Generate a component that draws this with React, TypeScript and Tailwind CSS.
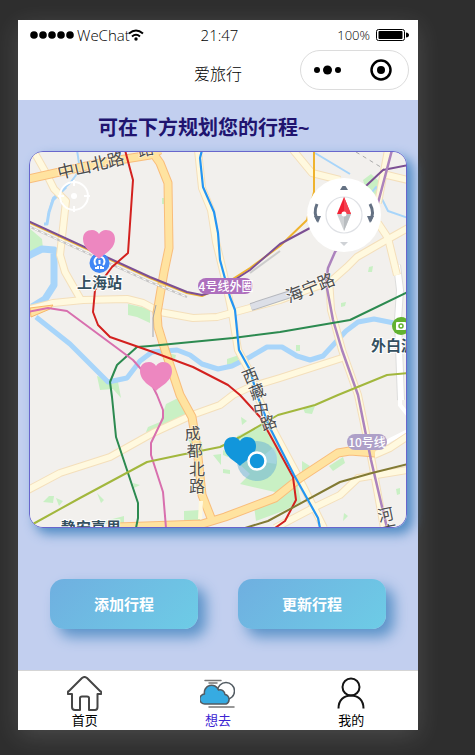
import React from 'react';

const roads = {
  cream: [
    'M33 150 L46 173 L54 189 L66 201 L60 255 L65 272 L81 300',
    'M30 309 L53 303 L83 300 L127 299 L143 303 L160 312 L193 318 L217 317 L250 308 L280 300 L307 290 L330 282 L347 267 L357 257 L383 242 L408 228',
    'M198 150 L202 188 L211 210 L216 242 L224 275 L232 313 L238 350 L250 372 L257 395 L271 426 L299 478 L324 528',
    'M28 490 L60 473 L110 457 L153 433 L192 415 L220 405 L233 395 L250 387 L280 378 L342 358',
    'M275 528 L315 507 L340 495 L358 478 L408 470',
    'M293 150 L312 173 L340 180',
    'M378 223 L388 238 L397 275',
    'M387 175 L408 180',
    'M388 150 L378 203 M329 278 L331 310 L342 350 L358 395 L372 462 L384 528',
    'M374 455 L390 448 L408 436',
  ],
  orange: [
    'M28 179 L100 163 L150 155 L160 150',
    'M148 146 L160 163 L168 183 L169 248 L164 272 L157 313 L158 327 L165 350 L180 395 L192 417 L197 448 L202 495 L213 523',
    'M117 527 L202 524 L225 517 L275 498 L300 478 L338 453 L350 451 L375 453',
  ],
};

const Heart = ({ x, y, fill }: { x: number; y: number; fill: string }) => (
  <path
    transform={`translate(${x} ${y})`}
    fill={fill}
    d="M16 29 C13 25 0 20 0 9 C0 3 4 0 9 0 C12 0 15 2 16 4 C17 2 20 0 23 0 C28 0 32 3 32 9 C32 20 19 25 16 29Z"
  />
);

const CityMap = () => (
  <svg
    viewBox="30 152 376 375"
    preserveAspectRatio="xMidYMid slice"
    className="block h-full w-full font-['Noto_Sans_CJK_SC',sans-serif]"
    role="img"
    aria-label="地图"
  >
    <rect x="0" y="100" width="476" height="500" fill="#f2f0ed" />
    <g fill="#c9f0c4">
      <path d="M28 227 L42 239 L43 249 L28 259Z" />
      <path d="M128 304 L150 309 L150 323 L137 317 L128 315Z" />
      <path d="M97 376 L118 382 L121 398 L113 389 L100 390Z" />
      <path d="M166 404 L178 398 L187 416 L161 430 L146 432 L148 427 L160 422Z" />
      <path d="M237 436 L264 424 L296 476 L301 502 L283 511 L256 521 L254 506 L273 498 L275 492 L240 484 L250 474 L237 462Z" />
      <path d="M363 180 L371 174 L380 182 L375 196 L366 190Z" />
      <path d="M227 359 L239 355 L238 363 L227 365Z" />
      <path d="M329 466 L343 457 L345 463 L333 471Z" />
      <path d="M184 511 L200 510 L200 522 L184 522Z M105 521 L124 516 L124 523 L105 524Z" />
      <path d="M303 408 L315 406 L312 414 L305 413Z M241 417 L247 421 L242 425Z M302 461 L310 466 L302 473Z" />
      <path d="M56 498 L63 501 L59 506Z M49 496 L54 496 L53 503 L43 502Z M97 493 L104 500 L101 503Z M133 483 L140 485 L134 488Z" />
      <path d="M341 303 L346 302 L345 306 L341 307Z M296 345 L300 345 L300 351 L296 351Z M369 267 L373 266 L372 272 L368 272Z M162 198 h3 v6 h-3Z" />
      <path d="M396 489 L400 488 L400 494 L397 495Z M344 513 L348 516 L343 521Z M223 450 L231 454 L228 457 L223 455Z M223 469 L230 470 L230 474 L223 473Z" />
      <path d="M169 353 L176 355 L175 359 L170 357Z M188 439 L202 442 L203 456 L195 453Z M213 455 L221 454 L221 465Z" />
    </g>
    <g fill="none" stroke="#a8d5fa" strokeLinejoin="round">
      <path strokeWidth="2" d="M77 150 L80 170 L70 183 L53 198 L48 216" />
      <path strokeWidth="3" d="M66 187 L53 200 L49 212 L47 224 L44 224" />
      <path strokeWidth="7" d="M26 257 L42 249 L54 250 L54 285 L45 299 L32 307" />
      <path strokeWidth="5" d="M36 317 L70 344 L94 368 L108 382 L127 378 L140 361 L152 352 L177 350 L190 355 L202 364 L218 369 L232 366 L250 357 L267 347 L282 347 L297 356 L310 360 L323 356 L335 343 L346 331 L358 322 L374 319 L394 323 L404 325" />
      <path strokeWidth="2" d="M315 153 L350 174 M366 200 L376 187 L388 211 L408 218" />
    </g>
    <path d="M397 265 L400 290 L398 320 L401 400" fill="none" stroke="#dddddc" strokeWidth="8" />
    <path d="M397 265 L400 290 L398 320 L401 400" fill="none" stroke="#fff" strokeWidth="6" />
    <path d="M400 395 V405 L408 415 M370 455 L390 440 L408 431" fill="none" stroke="#fff" strokeWidth="4" />
    <g fill="none" strokeLinejoin="round">
      {roads.cream.map((d) => <path key={d} d={d} stroke="#f4dfbb" strokeWidth="8" />)}
      {roads.cream.map((d) => <path key={d + 'in'} d={d} stroke="#fff9df" strokeWidth="6" />)}
      {roads.orange.map((d) => <path key={d} d={d} stroke="#f9bd7b" strokeWidth="9" />)}
      {roads.orange.map((d) => <path key={d + 'in'} d={d} stroke="#ffe3a0" strokeWidth="7" />)}
      <path d="M200 519 L201 501" stroke="#fff9df" strokeWidth="4" />
      <path d="M251 307 L300 291" stroke="#b5b7bd" strokeWidth="8" />
      <path d="M251 307 L300 291" stroke="#dcdfe7" strokeWidth="6" />
      <path d="M31 317 L50 309 L53 305 L30 308Z" fill="#ffe3a0" stroke="#f8b569" />
      <path d="M356 152 L384 169" stroke="#aaa" strokeDasharray="4 4" />
      <path d="M153 337 V318 L156 305" stroke="#a4a5aa" />
      <path d="M28 226 L150 282 L187 297" stroke="#c7c6c6" strokeWidth="2" />
      <path d="M28 226 L150 282 L187 297" stroke="#fff" strokeWidth="1" strokeDasharray="4 3" />
      <path d="M250 273 L280 251" stroke="#ccc" strokeWidth="2" />
    </g>
    <g fill="none" strokeWidth="2" strokeLinejoin="round">
      <path stroke="#efb32e" d="M28 222 L150 278 L187 293 L202 296 L217 289 L250 268 L280 246 L307 220 L314 192 L314 150" />
      <path stroke="#7c4f93" d="M28 221 L150 277 L187 292 L202 295 L217 291 L250 270 L280 244 L310 228 L367 185 L383 170 L408 165" />
      <path stroke="#ac83bd" strokeWidth="2.500" d="M392 150 L378 203 L335 252 L328 268 L326 283 L333 320 L342 350 L358 395 L371 460 L387 528" />
      <path stroke="#2c8a50" d="M408 292 L350 320 L280 332 L233 338 L150 346 L137 347 L117 365 L110 382 L112 397 L116 437 L138 503 L138 518 L136 528" />
      <path stroke="#d3211f" d="M125 150 L133 180 L128 253 L112 267 L95 290 L93 312 L98 325 L110 337 L150 351 L193 367 L228 385 L240 395 L260 417 L270 435 L293 477 L296 500 L285 521 L275 528" />
      <path stroke="#d86fae" d="M28 312 L48 308 L67 311 L117 348 L133 360 L148 377 L157 395 L163 410 L163 418 L151 443 L151 455 L163 492 L166 528" />
      <path stroke="#a2b73d" d="M33 524 L80 498 L147 462 L180 455 L220 447 L240 437 L278 415 L315 405 L338 395 L387 375 L408 373" />
      <path stroke="#827a34" d="M245 528 L268 521 L340 482 L372 473 L408 464" />
      <path stroke="#2495f3" strokeWidth="2.200" d="M202 150 L200 158 L203 187 L214 212 L218 233 L220 260 L230 297 L235 310 L239 350 L250 370 L257 395 L270 428 L294 475 L318 518 L320 528" />
    </g>
    <g fontSize="16" fill="#4d4d4d" stroke="#fff" strokeOpacity=".6" strokeWidth="1.500" paintOrder="stroke" strokeLinejoin="round">
      <text transform="translate(59 179) rotate(-13)" fontSize="17">中山北路</text>
      <text transform="translate(139 157) rotate(-13)">路</text>
      <text transform="translate(289 303) rotate(-22)" fontSize="17">海宁路</text>
      <text transform="translate(245 384) rotate(-22)">西</text>
      <text transform="translate(252 400) rotate(-22)">藏</text>
      <text transform="translate(254 416) rotate(-8)">中</text>
      <text transform="translate(263 431) rotate(-20)">路</text>
      <text transform="translate(185 440) rotate(-4)">成</text>
      <text transform="translate(187 457) rotate(-3)">都</text>
      <text x="189" y="475">北</text>
      <text x="189" y="492">路</text>
      <text transform="translate(379 522) rotate(-12)">河</text>
      <text transform="translate(383 539) rotate(-12)">南</text>
    </g>
    <circle cx="99.5" cy="263" r="10" fill="#4287f5" />
    <path d="M95 268 H98 V266 M104 268 H101 V266 M96 265 A5 5 0 1 1 103 265 M99.500 260 V264" fill="none" stroke="#fff" strokeWidth="2" />
    <circle cx="401" cy="326" r="9" fill="#62b230" />
    <rect x="396" y="322" width="10" height="8" rx="1" fill="#fff" />
    <circle cx="401" cy="326" r="2" fill="#fff" stroke="#62b230" strokeWidth="1.500" />
    <g fontSize="15" fontWeight="700" fill="#34505f" stroke="#fff" strokeWidth="2" paintOrder="stroke">
      <text x="77" y="288">上海站</text>
      <text x="371" y="351">外白渡桥</text>
      <text x="61" y="533">静安嘉里</text>
    </g>
    <rect x="198" y="278" width="55" height="16" rx="8" fill="#ae6fbd" />
    <rect x="347" y="434" width="40" height="16" rx="8" fill="#aea0c8" />
    <g fontSize="12" fontWeight="500" fill="#fff" textAnchor="middle">
      <text x="226" y="291">4号线外圈</text>
      <text x="367" y="447">10号线</text>
    </g>
    <circle cx="257" cy="461" r="20" fill="#64add6" fillOpacity=".5" />
    <path d="M257 461 L274 447 A20 20 0 0 1 276 464Z" fill="#add8e9" fillOpacity=".6" />
    <Heart x={83} y={230} fill="#ed87c0" />
    <Heart x={140} y={362} fill="#ed87c0" />
    <Heart x={224} y={437} fill="#1296db" />
    <circle cx="257" cy="461" r="8.500" fill="#1296db" stroke="#fff" strokeWidth="2.500" />
  </svg>
);

const Compass = () => (
  <button type="button" aria-label="指南针" className="absolute top-[26px] right-[25px] h-[74px] w-[74px] rounded-full bg-white">
    <svg viewBox="0 0 74 74" className="h-full w-full">
      <circle cx="37" cy="37" r="18" fill="#fff" stroke="#dfe1e5" strokeWidth="1.200" />
      <path d="M37 19 L44 36 H30Z" fill="#f21f32" />
      <path d="M37 19 V36 H44Z" fill="#f4404f" />
      <path d="M37 53 L44 36 H30Z" fill="#cfd2d4" />
      <path d="M37 53 V36 H44Z" fill="#b9bdc0" />
      <circle cx="37" cy="36" r="2.500" fill="#fff" />
      <path d="M33 12 L35.500 8 H38.500 L41 12Z" fill="#647183" />
      <path d="M33 64 L37 68 L41 64Z" fill="#cfd2d6" />
      <path d="M10 26 Q6 35 11 43 M63 26 Q68 35 63 43" fill="none" stroke="#647183" strokeWidth="3" />
      <path d="M7 38 L11 45 L14 38Z M67 38 L63 45 L60 38Z" fill="#647183" />
    </svg>
  </button>
);

const Locate = () => (
  <button type="button" aria-label="定位" className="absolute top-7 left-7 h-8 w-8">
    <svg viewBox="0 0 32 32" className="h-full w-full" fill="none" stroke="#fff" strokeWidth="2">
      <circle cx="16" cy="16" r="14" />
      <path d="M16 0 V6 M16 26 V32 M0 16 H6 M26 16 H32" />
      <circle cx="16" cy="16" r="3" fill="#fff" stroke="none" />
    </svg>
  </button>
);

const HomeIcon = () => (
  <svg viewBox="0 0 35 35" className="h-[35px] w-[35px]" fill="#fff" stroke="#464646" strokeWidth="2" strokeLinejoin="round">
    <path d="M1 18 Q0 16 2 15 L15 2 Q17.500 0 20 2 L33 15 Q35 16 34 18 H30.500 V31 Q30.500 34 28 34 H22 V22 Q22 20.500 20 20.500 H15 Q13 20.500 13 22 V34 H8 Q5 34 5 31 V18Z" />
  </svg>
);

const CloudIcon = () => (
  <svg viewBox="0 0 35 35" className="h-[35px] w-[35px]" fill="none" stroke="#525b62" strokeWidth="1.500" strokeLinecap="round">
    <path d="M5 4.500 H21 M9 7 H17 M9 31 H34" stroke="#777" />
    <circle cx="26" cy="15" r="8.500" fill="#fff" />
    <path d="M5 28 A4.500 4.500 0 0 1 4.500 18 A7.300 7.300 0 0 1 18.500 14 A5 5 0 0 1 25 18.500 A5 5 0 0 1 26 28Z" fill="#36abe2" strokeLinejoin="round" />
  </svg>
);

const UserIcon = () => (
  <svg viewBox="0 0 35 35" className="h-[35px] w-[35px]" fill="none" stroke="#141414" strokeWidth="2">
    <circle cx="17" cy="11" r="8.500" />
    <path d="M4.500 32.500 C4.500 24 10 19.500 17 19.500 S29.500 24 29.500 32.500" />
  </svg>
);

const tabs = [
  { label: '首页', icon: <HomeIcon />, active: false },
  { label: '想去', icon: <CloudIcon />, active: true },
  { label: '我的', icon: <UserIcon />, active: false },
];

const actions = ['添加行程', '更新行程'];

export default function App() {
  return (
    <div className="min-h-screen bg-[#2e2e2e] pt-5 pr-[57px] pb-[25px] pl-[18px] font-['Open_Sans','Noto_Sans_CJK_SC',sans-serif] text-black">
      <div className="bg-[#c2cfef] shadow-[0_6px_24px_rgba(255,255,255,0.14)]">
        <header className="h-20 bg-white">
          <div className="grid h-[30px] grid-cols-3 items-center pr-[9px] pl-3">
            <div className="flex items-center gap-[3px] text-[15px] leading-5 font-light">
              <svg viewBox="0 0 44 8" className="h-2 w-11" aria-hidden="true">
                {[4, 13, 22, 31, 40].map((x) => <circle key={x} cx={x} cy="4" r="3.800" />)}
              </svg>
              <span className="flex items-center">
                WeChat
                <svg viewBox="0 0 16 12" className="-ml-0.5 h-3 w-4" fill="none" stroke="#000" strokeWidth="2" aria-hidden="true">
                  <path d="M1 4.500 Q8 -1.500 15 4.500 M4 7.500 Q8 4 12 7.500" />
                  <circle cx="8" cy="10" r="1.700" fill="#000" stroke="none" />
                </svg>
              </span>
            </div>
            <span className="text-center text-[15px] leading-5 font-light">21:47</span>
            <div className="flex items-center justify-end gap-1.5">
              <span className="text-[13px] leading-5 font-light">100%</span>
              <svg viewBox="0 0 33 12" className="h-3 w-[33px]" aria-label="电量" role="img">
                <rect x="0.500" y="0.500" width="28" height="11" rx="2" fill="#fff" stroke="#000" />
                <rect x="2.500" y="2" width="24" height="8" rx="1" />
                <path d="M30 3.500 Q33 4 33 6 T30 8.500Z" />
              </svg>
            </div>
          </div>
          <div className="grid h-[50px] grid-cols-[1fr_auto_1fr] items-center px-[9px]">
            <span />
            <h1 className="pb-0.5 text-[16px] leading-6 font-light">爱旅行</h1>
            <div className="mb-2.5 flex h-10 w-[109px] items-center justify-between justify-self-end rounded-full border border-[#dcdcdc] pr-4 pl-3">
              <button type="button" aria-label="更多">
                <svg viewBox="0 0 28 10" className="h-2.5 w-7">
                  <circle cx="4" cy="5" r="3" />
                  <circle cx="14.500" cy="5" r="4.500" />
                  <circle cx="25" cy="5" r="3" />
                </svg>
              </button>
              <button type="button" aria-label="关闭">
                <svg viewBox="0 0 22 22" className="h-[22px] w-[22px]">
                  <circle cx="11" cy="11" r="9.500" fill="none" stroke="#000" strokeWidth="2.500" />
                  <circle cx="11" cy="11" r="4" />
                </svg>
              </button>
            </div>
          </div>
        </header>

        <main className="pb-[41px]">
          <h2 className="pt-[13px] pb-2 pl-20 text-[20px] leading-[30px] font-bold text-[#20146f]">可在下方规划您的行程~</h2>
          <section className="relative mx-[11px] h-[377px] rounded-[14px] border border-[#6866cc] shadow-[6px_6px_12px_#4f8bc4]">
            <div className="h-full overflow-hidden rounded-[13px]">
              <CityMap />
            </div>
            <Locate />
            <Compass />
          </section>
          <div className="mt-[51px] grid grid-cols-2 gap-10 px-8">
            {actions.map((label) => (
              <button
                key={label}
                type="button"
                className="h-[50px] rounded-[14px] bg-linear-135 from-[#6fafe0] to-[#6dcce6] text-[15px] leading-5 font-bold text-white shadow-[8px_8px_14px_#5b93c9]"
              >
                {label}
              </button>
            ))}
          </div>
        </main>

        <nav className="grid h-[60px] grid-cols-3 border-t border-[#d5d5d5] bg-white">
          {tabs.map((tab) => (
            <a
              key={tab.label}
              href="#"
              aria-current={tab.active ? 'page' : undefined}
              className={`flex flex-col items-center pt-[5px] text-[13px] leading-[18px] ${tab.active ? 'text-[#3c24d2]' : 'text-black'}`}
            >
              {tab.icon}
              <span>{tab.label}</span>
            </a>
          ))}
        </nav>
      </div>
    </div>
  );
}
